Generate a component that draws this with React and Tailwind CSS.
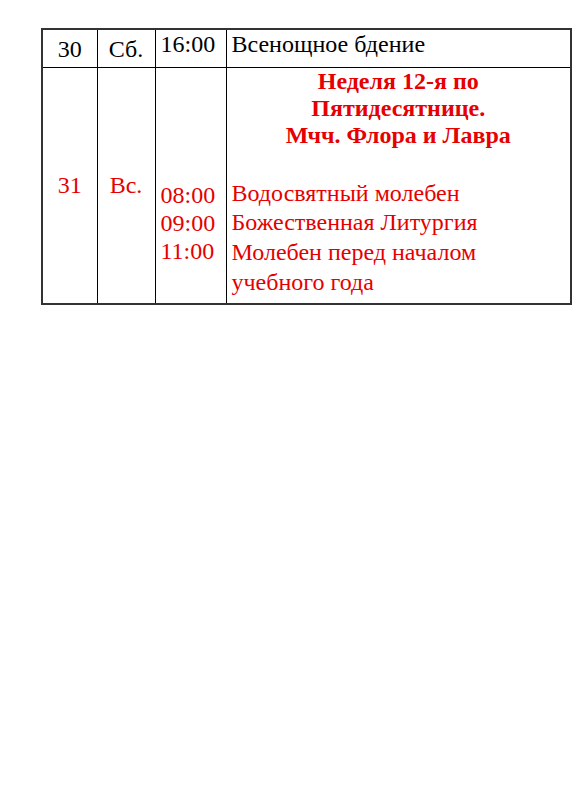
export default function App() {
  return (
    <div className="min-h-[800px] w-[582px] bg-white pl-[41px] pt-[28px] font-['Liberation_Serif',serif] text-[24px] text-black">
      <table className="w-[531px] table-fixed border-collapse border-2 border-[#333]">
        <colgroup>
          <col className="w-[55px]" />
          <col className="w-[58px]" />
          <col className="w-[71px]" />
          <col />
        </colgroup>
        <tbody>
          <tr className="h-[38px]">
            <td className="border border-black pt-[2px] text-center align-middle leading-[28px]">30</td>
            <td className="border border-black pt-[2px] text-center align-middle leading-[28px]">Сб.</td>
            <td className="border border-black px-[5px] align-top leading-[28px]">16:00</td>
            <td className="border border-black px-[5px] align-top leading-[28px]">Всенощное бдение</td>
          </tr>
          <tr className="h-[237px] text-[#e60000]">
            <td className="border border-black text-center align-middle leading-[28px]">31</td>
            <td className="border border-black text-center align-middle leading-[28px]">Вс.</td>
            <td className="border border-black px-[5px] pt-[113px] align-top leading-[28px]">
              <div>08:00</div>
              <div>09:00</div>
              <div>11:00</div>
            </td>
            <td className="border border-black px-[5px] align-top">
              <div className="text-center font-bold leading-[27px]">
                <div>Неделя 12-я по</div>
                <div>Пятидесятнице.</div>
                <div>Мчч. Флора и Лавра</div>
              </div>
              <div className="pt-[30px] leading-[29px]">
                <div>Водосвятный молебен</div>
                <div>Божественная Литургия</div>
                <div className="pt-[1px]">Молебен перед началом</div>
                <div className="pt-[1px]">учебного года</div>
              </div>
            </td>
          </tr>
        </tbody>
      </table>
    </div>
  );
}
